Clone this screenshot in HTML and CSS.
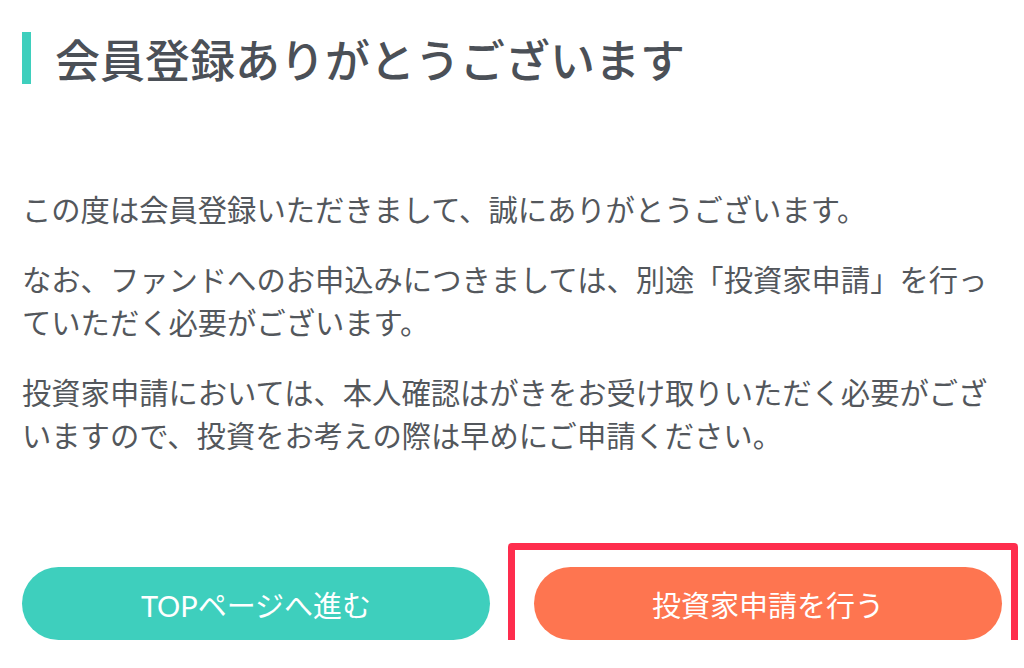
FILE: index.html
```html
<!DOCTYPE html>
<html lang="ja">
<head>
    <meta charset="UTF-8">
    <title>会員登録完了</title>
    <link rel="stylesheet" href="styles.css">
</head>
<body>
<div class="page">
    <h1 class="title"><span class="titleBar"></span>会員登録ありがとうございます</h1>
    <div class="message">
        <p>この度は会員登録いただきまして、誠にありがとうございます。</p>
        <p>なお、ファンドへのお申込みにつきましては、別途「投資家申請」を行っていただく必要がございます。</p>
        <p>投資家申請においては、本人確認はがきをお受け取りいただく必要がございますので、投資をお考えの際は早めにご申請ください。</p>
    </div>
    <div class="buttons">
        <a class="btn btnTop">TOPページへ進む</a>
        <div class="btnWrap">
            <a class="btn btnApply">投資家申請を行う</a>
            <span class="highlight"></span>
        </div>
    </div>
</div>
</body>
</html>
```

FILE: styles.css
```css
*{
    margin: 0;
    padding: 0;
}
body
{
    background: #fff;
    font-family: "Lato", "Noto Sans CJK JP", sans-serif;
}
.page
{
    width: 980px;
    padding: 32px 22px 0;
}
.title
{
    display: flex;
    align-items: center;
    gap: 24px;
    height: 52px;
    font-size: 45px;
    font-weight: 500;
    color: #4b5057;
}
.titleBar
{
    width: 9px;
    height: 52px;
    background: #3ecfbd;
}
.message
{
    margin-top: 104px;
    color: #53575c;
    font-size: 29.3px;
    line-height: 43px;
}
.message p+p
{
    margin-top: 27px;
}
.buttons
{
    display: flex;
    gap: 44px;
    margin-top: 110px;
}
.btnWrap
{
    position: relative;
    flex: 1;
}
.btn
{
    display: flex;
    align-items: center;
    justify-content: center;
    height: 73px;
    border-radius: 37px;
    color: #fff;
    font-size: 29px;
    font-weight: 400;
}
.btnTop
{
    flex: 1;
    background: #3ecfbd;
}
.btnApply
{
    background: #fe7550;
}
/*赤い枠（注釈）*/
.highlight
{
    position: absolute;
    left: -26px;
    right: -16px;
    top: -24px;
    bottom: -22px;
    border: 7px solid #fe2d4d;
    border-radius: 4px;
}
```
